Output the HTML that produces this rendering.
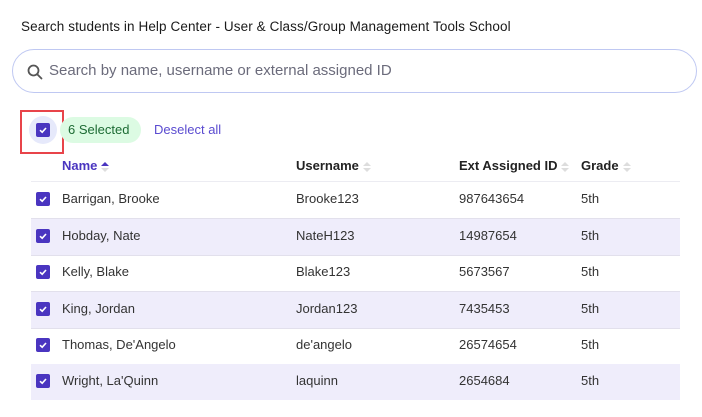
<!DOCTYPE html>
<html><head><meta charset="utf-8"><style>
*{box-sizing:border-box;margin:0;padding:0}
body{width:702px;height:417px;background:#fff;font-family:"Liberation Sans",sans-serif;color:#222;position:relative;overflow:hidden}
.abs{position:absolute}
.title{left:21px;top:19px;font-size:13.5px;color:#1a1a1a;letter-spacing:0.1px}
.search{left:12px;top:49px;width:685px;height:44px;border:1px solid #bfc8f2;border-radius:22px}
.search span{position:absolute;left:36px;top:12px;font-size:15px;color:#6b6b7b}
.cb{width:14px;height:14px;background:#4a35c0;border-radius:2px;position:absolute}
.cb svg{position:absolute;left:2px;top:2px}
.row{position:absolute;left:31px;width:649px;height:37px;border-bottom:1px solid #e2e0ec;font-size:13px;color:#333}
.row.alt{background:#efedfb}
.row span{position:absolute;top:9px}
.hd{position:absolute;top:158px;font-size:13px;font-weight:bold;color:#222}
.sort{display:inline-block;vertical-align:middle;margin-left:4px}
</style></head><body>
<div class="abs title">Search students in Help Center - User &amp; Class/Group Management Tools School</div>
<div class="abs search">
<svg class="abs" style="left:14px;top:14px" width="16" height="16" viewBox="0 0 16 16"><circle cx="6.5" cy="6.5" r="5" fill="none" stroke="#555" stroke-width="1.8"/><path d="M10.2 10.2L14.5 14.5" stroke="#555" stroke-width="1.8" stroke-linecap="round"/></svg>
<span>Search by name, username or external assigned ID</span></div>
<div class="abs" style="left:20px;top:110px;width:44px;height:44px;border:2px solid #e8444a"></div>
<div class="abs" style="left:29px;top:116px;width:28px;height:28px;border-radius:50%;background:#e6e9fb"></div>
<div class="cb" style="left:36px;top:123px"><svg width="10" height="10" viewBox="0 0 10 10"><path d="M2 5.2L4.2 7.2L8 3" fill="none" stroke="#fff" stroke-width="1.6"/></svg></div>
<div class="abs" style="left:60px;top:117px;width:81px;height:26px;border-radius:13px;background:#dcfbe3;color:#1d6b34;font-size:13px;line-height:26px;padding-left:8px">6 Selected</div>
<div class="abs" style="left:154px;top:122px;font-size:13px;color:#5a4bd0">Deselect all</div>
<div class="hd" style="left:62px;color:#4a35c0">Name<svg class="sort" width="8" height="12" viewBox="0 0 8 12"><path d="M0 5L4 1L8 5Z" fill="#4a35c0"/><path d="M0 7L4 11L8 7Z" fill="#ddd"/></svg></div>
<div class="hd" style="left:296px">Username<svg class="sort" width="8" height="12" viewBox="0 0 8 12"><path d="M0 5L4 1L8 5Z" fill="#ddd"/><path d="M0 7L4 11L8 7Z" fill="#ddd"/></svg></div>
<div class="hd" style="left:459px">Ext Assigned ID<svg class="sort" width="8" height="12" viewBox="0 0 8 12"><path d="M0 5L4 1L8 5Z" fill="#ddd"/><path d="M0 7L4 11L8 7Z" fill="#ddd"/></svg></div>
<div class="hd" style="left:581px">Grade<svg class="sort" width="8" height="12" viewBox="0 0 8 12"><path d="M0 5L4 1L8 5Z" fill="#ddd"/><path d="M0 7L4 11L8 7Z" fill="#ddd"/></svg></div>
<div class="abs" style="left:31px;top:181px;width:649px;height:1px;background:#ececf2"></div>

<div class="row" style="top:182px"><div class="cb" style="left:5px;top:10px"><svg width="10" height="10" viewBox="0 0 10 10"><path d="M2 5.2L4.2 7.2L8 3" fill="none" stroke="#fff" stroke-width="1.6"/></svg></div><span style="left:31px">Barrigan, Brooke</span><span style="left:265px">Brooke123</span><span style="left:428px">987643654</span><span style="left:550px">5th</span></div>
<div class="row alt" style="top:218.5px"><div class="cb" style="left:5px;top:10px"><svg width="10" height="10" viewBox="0 0 10 10"><path d="M2 5.2L4.2 7.2L8 3" fill="none" stroke="#fff" stroke-width="1.6"/></svg></div><span style="left:31px">Hobday, Nate</span><span style="left:265px">NateH123</span><span style="left:428px">14987654</span><span style="left:550px">5th</span></div>
<div class="row" style="top:255px"><div class="cb" style="left:5px;top:10px"><svg width="10" height="10" viewBox="0 0 10 10"><path d="M2 5.2L4.2 7.2L8 3" fill="none" stroke="#fff" stroke-width="1.6"/></svg></div><span style="left:31px">Kelly, Blake</span><span style="left:265px">Blake123</span><span style="left:428px">5673567</span><span style="left:550px">5th</span></div>
<div class="row alt" style="top:291.5px"><div class="cb" style="left:5px;top:10px"><svg width="10" height="10" viewBox="0 0 10 10"><path d="M2 5.2L4.2 7.2L8 3" fill="none" stroke="#fff" stroke-width="1.6"/></svg></div><span style="left:31px">King, Jordan</span><span style="left:265px">Jordan123</span><span style="left:428px">7435453</span><span style="left:550px">5th</span></div>
<div class="row" style="top:328px"><div class="cb" style="left:5px;top:10px"><svg width="10" height="10" viewBox="0 0 10 10"><path d="M2 5.2L4.2 7.2L8 3" fill="none" stroke="#fff" stroke-width="1.6"/></svg></div><span style="left:31px">Thomas, De'Angelo</span><span style="left:265px">de'angelo</span><span style="left:428px">26574654</span><span style="left:550px">5th</span></div>
<div class="row alt" style="top:364px;border-bottom:none;height:36px"><div class="cb" style="left:5px;top:10px"><svg width="10" height="10" viewBox="0 0 10 10"><path d="M2 5.2L4.2 7.2L8 3" fill="none" stroke="#fff" stroke-width="1.6"/></svg></div><span style="left:31px">Wright, La'Quinn</span><span style="left:265px">laquinn</span><span style="left:428px">2654684</span><span style="left:550px">5th</span></div>
</body></html>
